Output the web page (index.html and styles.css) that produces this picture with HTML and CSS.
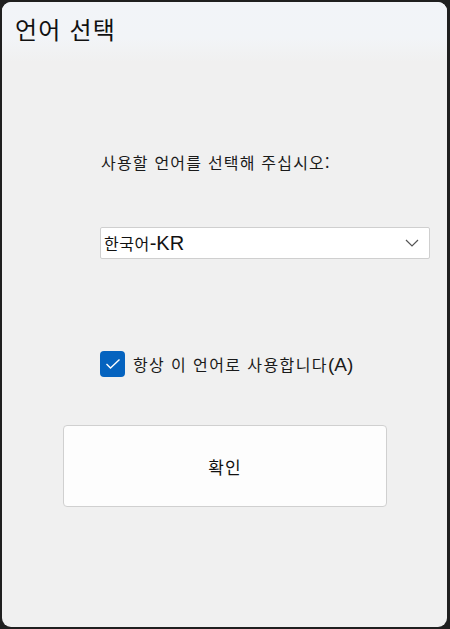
FILE: index.html
```html
<!DOCTYPE html>
<html lang="ko">
  <head>
    <meta charset="UTF-8" />
    <meta name="viewport" content="width=device-width, initial-scale=1.0" />
    <title>언어 선택</title>
    <link rel="stylesheet" href="styles.css">
  </head>
  <body>
    <div class="window">
      <div class="titlebar">언어 선택</div>

      <div class="content">
        <p class="prompt">사용할 언어를 선택해 주십시오:</p>

        <div class="select">
          <span class="select-value">한국어<span class="latin">-KR</span></span>
          <svg class="chevron" width="14" height="8" viewBox="0 0 14 8">
            <path d="M1 1 L7 7 L13 1" fill="none" stroke="#555" stroke-width="1.2" />
          </svg>
        </div>

        <label class="check-row">
          <span class="checkbox">
            <svg width="16" height="12" viewBox="0 0 16 12">
              <path d="M1.5 6 L5.5 10 L14.5 1.5" fill="none" stroke="#fff" stroke-width="1.4" />
            </svg>
          </span>
          <span>항상 이 언어로 사용합니다<span class="latin">(A)</span></span>
        </label>

        <div class="button-row">
          <button class="ok" type="button">확인</button>
        </div>
      </div>
    </div>
  </body>
</html>
```

FILE: styles.css
```css
html, body {
  margin: 0;
  height: 100%;
}
body {
  background-color: #1f1f1f;
  font-family: "Noto Sans CJK KR", sans-serif;
  color: #1a1a1a;
  padding: 2px 3px 2px 2px;
  box-sizing: border-box;
}
.latin {
  font-family: "Liberation Sans", sans-serif;
}
.window {
  height: 625px;
  background: #f0f0f0;
  border-radius: 9px;
  overflow: hidden;
  display: flex;
  flex-direction: column;
}
.titlebar {
  height: 60px;
  padding: 13px 0 0 13px;
  box-sizing: border-box;
  font-size: 24px;
  line-height: 28px;
  letter-spacing: 1.2px;
  color: #111;
  background: linear-gradient(to bottom, #f2f4f8 0%, #f2f4f7 60%, #f0f0f0 100%);
}
.content {
  padding: 0 0 0 98px;
}
.prompt {
  margin: 89px 0 0 1px;
  font-size: 16px;
  line-height: 22px;
  letter-spacing: 1.2px;
}
.select {
  margin-top: 54px;
  width: 330px;
  height: 32px;
  box-sizing: border-box;
  background: #fff;
  border: 1px solid #cfcfcf;
  border-radius: 2px;
  display: flex;
  align-items: center;
  justify-content: space-between;
  padding: 0 10px 0 3px;
}
.select-value {
  font-size: 16px;
  letter-spacing: 0.5px;
  color: #111;
}
.select-value .latin {
  font-size: 20px;
  letter-spacing: 0;
}
.check-row {
  margin-top: 92px;
  display: flex;
  align-items: center;
  gap: 8px;
  font-size: 16px;
  letter-spacing: 1.4px;
  color: #1a1a1a;
}
.check-row .latin {
  font-size: 19px;
  letter-spacing: 0;
}
.checkbox {
  width: 25px;
  height: 26px;
  border-radius: 4px;
  background: #0563bf;
  display: flex;
  align-items: center;
  justify-content: center;
}
.button-row {
  margin: 48px 0 0 -37px;
}
.ok {
  width: 324px;
  height: 82px;
  background: #fdfdfd;
  border: 1px solid #d0d0d0;
  border-radius: 4px;
  font-family: "Noto Sans CJK KR", sans-serif;
  font-size: 17px;
  letter-spacing: 1px;
  color: #111;
}
```
